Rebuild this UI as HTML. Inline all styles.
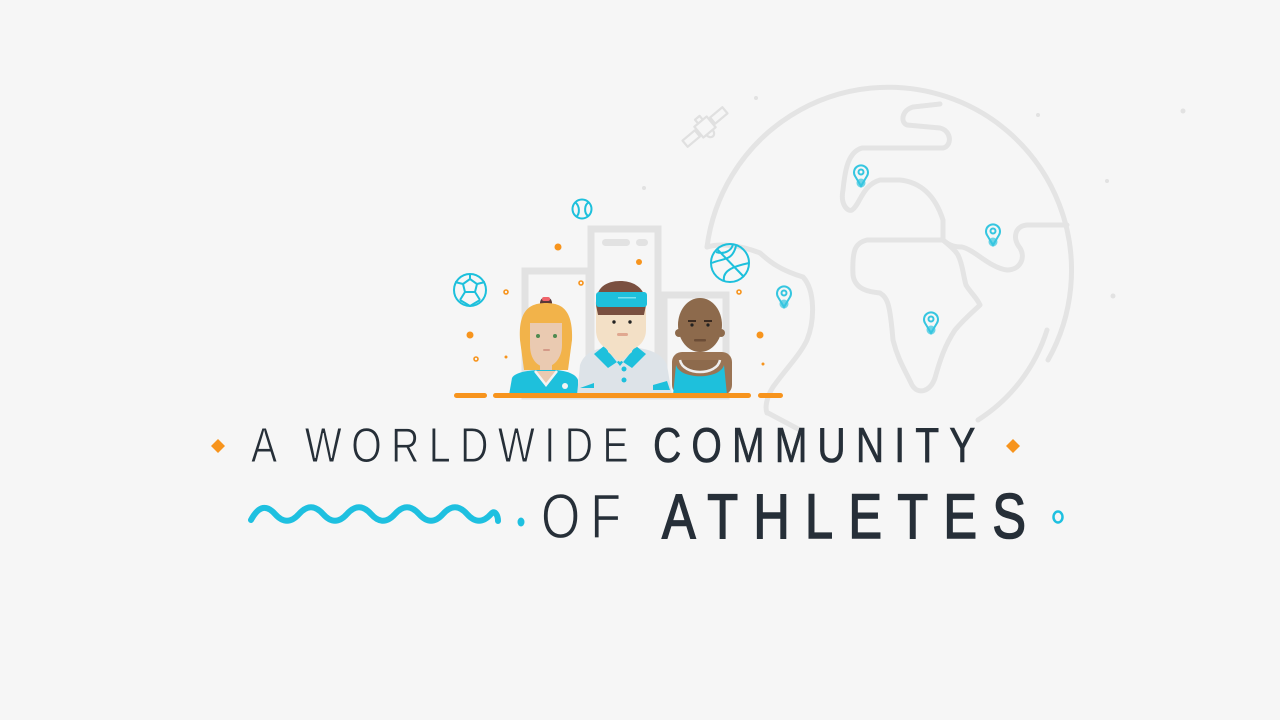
<!DOCTYPE html>
<html><head><meta charset="utf-8"><style>
html,body{margin:0;padding:0;background:#f6f6f6;width:1280px;height:720px;overflow:hidden}
svg{display:block}
</style></head><body>
<svg width="1280" height="720" viewBox="0 0 1280 720" xmlns="http://www.w3.org/2000/svg">
<rect width="1280" height="720" fill="#f6f6f6"/>
<g fill="#e2e2e2"><circle cx="756" cy="98" r="2"/><circle cx="1038" cy="115" r="2"/><circle cx="1183" cy="111" r="2.5"/><circle cx="1107" cy="181" r="2"/><circle cx="1113" cy="296" r="2.5"/><circle cx="644" cy="188" r="2"/></g>
<g fill="none" stroke="#e4e4e4" stroke-width="5" stroke-linecap="round" stroke-linejoin="round">
<path d="M707 247 A183 183 0 1 1 1048 360"/>
<path d="M1047 330 A165 165 0 0 1 978 420"/>
<path d="M707 247 C720 243 740 245 760 253 C770 262 780 270 803 277 C815 290 815 320 807 340 C800 355 785 370 773 387 C766 398 765 408 767 413"/>
<path d="M768 413 L800 430"/>
<path d="M940 104 L913 107 C902 110 900 122 907 125 L940 128 C952 131 952 146 943 148 L862 148 C848 152 845 170 843 190 C840 205 848 212 852 210 C860 205 862 185 880 180 L900 180 C920 182 935 195 943 220 L943 240 C950 246 955 247 962 247 C975 250 990 268 1007 270 C1020 270 1026 258 1020 248 C1012 238 1015 226 1027 225 L1067 225"/>
<path d="M943 240 L867 240 C855 243 852 250 853 275 C855 290 870 292 880 293 C888 298 890 305 893 340 C898 360 905 370 912 385 C918 395 930 392 935 378 C940 360 945 345 955 330 C965 318 975 310 980 305 C977 298 970 292 966 285 C963 275 963 265 958 255 C955 250 950 246 943 240 Z"/>
</g>
<g fill="none" stroke="#e0e0e0" stroke-width="2.2" stroke-linejoin="round" transform="translate(705,127) rotate(-40)">
<rect x="-26" y="-4" width="16" height="8"/><rect x="10" y="-4" width="16" height="8"/>
<rect x="-8" y="-7" width="16" height="14"/><path d="M-3 -7 L-3 -12 L3 -12 L3 -7"/><path d="M-4 7 C-4 14 4 14 4 7"/>
</g>
<g fill="none" stroke="#35c6e0" stroke-width="2">
<g transform="translate(861,176)"><path d="M0 10 L-6 0 A7 7 0 1 1 6 0 Z"/><circle cx="0" cy="-4" r="2.5"/><circle cx="0" cy="7" r="3.5" fill="#35c6e0" opacity=".7"/></g>
<g transform="translate(993,235)"><path d="M0 10 L-6 0 A7 7 0 1 1 6 0 Z"/><circle cx="0" cy="-4" r="2.5"/><circle cx="0" cy="7" r="3.5" fill="#35c6e0" opacity=".7"/></g>
<g transform="translate(784,297)"><path d="M0 10 L-6 0 A7 7 0 1 1 6 0 Z"/><circle cx="0" cy="-4" r="2.5"/><circle cx="0" cy="7" r="3.5" fill="#35c6e0" opacity=".7"/></g>
<g transform="translate(931,323)"><path d="M0 10 L-6 0 A7 7 0 1 1 6 0 Z"/><circle cx="0" cy="-4" r="2.5"/><circle cx="0" cy="7" r="3.5" fill="#35c6e0" opacity=".7"/></g>
</g>
<g fill="#f6f6f6" stroke="#e2e2e2" stroke-width="7">
<rect x="525" y="271" width="64" height="125"/>
<rect x="664" y="295" width="62" height="101"/>
<rect x="591" y="229" width="67" height="167"/>
</g>
<rect x="602" y="239" width="28" height="7" rx="3.5" fill="#e2e2e2"/><rect x="636" y="239" width="12" height="7" rx="3.5" fill="#e2e2e2"/>
<g fill="none" stroke="#1dc0dc" stroke-width="2">
<circle cx="470" cy="290" r="16"/><path d="M463 284 L470 279 L477 284 L475 292 L465 292 Z M470 279 L470 274 M477 284 L485 282 M475 292 L480 300 M465 292 L460 300 M463 284 L455 282 M460 300 L470 306 L480 300"/>
<circle cx="582" cy="209" r="9.5"/><path d="M575 202 C580 206 580 214 576 217 M589 202 C584 205 584 213 588 216"/>
<circle cx="730" cy="263" r="19"/><path d="M717 249 L744 277 M712 263 C722 258 732 262 736 246 M724 281 C722 270 735 266 749 263 M716 252 C725 255 732 250 733 244"/>
</g>
<g fill="#f7941d"><circle cx="558" cy="247" r="3.5"/><circle cx="639" cy="262" r="3"/><circle cx="470" cy="335" r="3.5"/><circle cx="760" cy="335" r="3.5"/><circle cx="506" cy="357" r="1.5"/><circle cx="763" cy="364" r="1.5"/></g>
<g fill="none" stroke="#f7941d" stroke-width="1.6"><circle cx="506" cy="292" r="2"/><circle cx="581" cy="283" r="2"/><circle cx="739" cy="292" r="2"/><circle cx="476" cy="359" r="2"/></g>
<circle cx="546" cy="303" r="6" fill="#5a3838"/><rect x="542" y="297" width="8" height="4" rx="2" fill="#f0636a"/>
<path d="M520 340 C518 310 530 303 546 303 C562 303 573 310 572 340 L568 370 L524 370 Z" fill="#f2b34a"/>
<path d="M530 323 L562 323 L562 345 C562 360 552 367 546 367 C538 367 530 360 530 345 Z" fill="#eacab1"/>
<rect x="540" y="355" width="12" height="18" fill="#eacab1"/>
<path d="M509 395 L512 378 C515 372 530 370 540 370 L552 370 C566 370 576 374 578 380 L578 395 Z" fill="#1ec0dc"/>
<path d="M535 371 L546 385 L557 371" fill="#eacab1" stroke="#f3f3f3" stroke-width="2.5"/>
<circle cx="565" cy="386" r="3" fill="#f3f3f3"/>
<circle cx="538" cy="336" r="2" fill="#4e8a50"/><circle cx="555" cy="336" r="2" fill="#4e8a50"/><rect x="543" y="349" width="7" height="2" rx="1" fill="#d49a88"/>
<rect x="672" y="352" width="60" height="43" rx="10" fill="#9a7454"/>
<ellipse cx="700" cy="325" rx="22" ry="27" fill="#8d6a4c"/>
<circle cx="679" cy="333" r="4" fill="#8d6a4c"/><circle cx="721" cy="333" r="4" fill="#8d6a4c"/>
<path d="M676 365 C680 380 720 380 724 365 L727 395 L673 395 Z" fill="#1ec0dc"/>
<path d="M680 360 C683 376 717 376 720 360" fill="#8d6a4c" stroke="#eee" stroke-width="2.5"/>
<rect x="688" y="320" width="8" height="2" fill="#3a2a20"/><rect x="704" y="320" width="8" height="2" fill="#3a2a20"/><circle cx="692" cy="325" r="1.6" fill="#222"/><circle cx="708" cy="325" r="1.6" fill="#222"/><rect x="694" y="339" width="12" height="2.5" rx="1" fill="#6b4c36"/>
<path d="M577 395 L580 365 C585 350 600 348 612 347 L630 347 C645 348 662 352 667 365 L672 395 Z" fill="#dde3e8"/>
<path d="M604 346 L620 366 L636 346 L646 354 L632 368 L620 360 L608 368 L594 354 Z" fill="#1ec0dc"/>
<path d="M608 340 L632 340 L632 352 L620 362 L608 352 Z" fill="#f3e0c6"/>
<circle cx="624" cy="369" r="2.5" fill="#1ec0dc"/><circle cx="624" cy="380" r="2.5" fill="#1ec0dc"/>
<path d="M580 388 L594 383 L594 388 Z M667 381 L653 385 L653 390 L670 390 Z" fill="#1ec0dc"/>
<path d="M596 310 C596 290 606 282 620 282 C636 282 646 290 646 310 L646 330 C646 345 632 352 620 352 C608 352 596 345 596 330 Z" fill="#f3e0c6"/>
<path d="M596 305 C595 288 606 281 620 281 C634 281 646 288 646 305 L644 315 L598 315 Z" fill="#7a5040"/>
<rect x="596" y="292" width="51" height="15" rx="3" fill="#1ec0dc"/><rect x="618" y="297" width="18" height="1.5" fill="#7ee0ee"/>
<circle cx="614" cy="322" r="1.7" fill="#222"/><circle cx="630" cy="322" r="1.7" fill="#222"/><rect x="617" y="333" width="11" height="3" rx="1.5" fill="#e0a890"/>
<g fill="#f7941d"><rect x="454" y="393" width="33" height="5" rx="2.5"/><rect x="493" y="393" width="258" height="5" rx="2.5"/><rect x="758" y="393" width="25" height="5" rx="2.5"/></g>
<path d="M218 439 L225 446 L218 453 L211 446 Z" fill="#f7941d"/>
<path d="M1013 439 L1020 446 L1013 453 L1006 446 Z" fill="#f7941d"/>
<g font-family="Liberation Sans, sans-serif" fill="#262f38">
<g transform="translate(251,462) scale(0.8,1)"><text x="0" y="0" font-size="49" textLength="472" lengthAdjust="spacing" stroke="#f6f6f6" stroke-width="1">A WORLDWIDE</text></g>
<g transform="translate(653,462) scale(0.8,1)"><text x="0" y="0" font-size="49" textLength="403" lengthAdjust="spacing" stroke="#262f38" stroke-width="0.6">COMMUNITY</text></g>
<g transform="translate(541,538) scale(0.8,1)"><text x="0" y="0" font-size="63" textLength="100" lengthAdjust="spacing" stroke="#f6f6f6" stroke-width="1.2">OF</text></g>
<g transform="translate(662,538) scale(0.8,1)"><text x="0" y="0" font-size="63" textLength="455" lengthAdjust="spacing" stroke="#262f38" stroke-width="1.6">ATHLETES</text></g>
</g>
<path d="M251 520 C259 505 267 505 275 514 C283 523 291 523 299 514 C307 505 315 505 323 514 C331 523 339 523 347 514 C355 505 363 505 371 514 C379 523 387 523 395 514 C403 505 411 505 419 514 C427 523 435 523 443 514 C451 505 459 505 467 514 C475 523 483 523 491 514 C495 509 498 516 498 521" fill="none" stroke="#1ec0e0" stroke-width="6" stroke-linecap="round"/>
<ellipse cx="521" cy="522" rx="3.5" ry="4.5" fill="#1ec0e0"/>
<ellipse cx="1058" cy="517" rx="4.5" ry="5.5" fill="none" stroke="#1ec0e0" stroke-width="2.5"/>
</svg>
</body></html>
